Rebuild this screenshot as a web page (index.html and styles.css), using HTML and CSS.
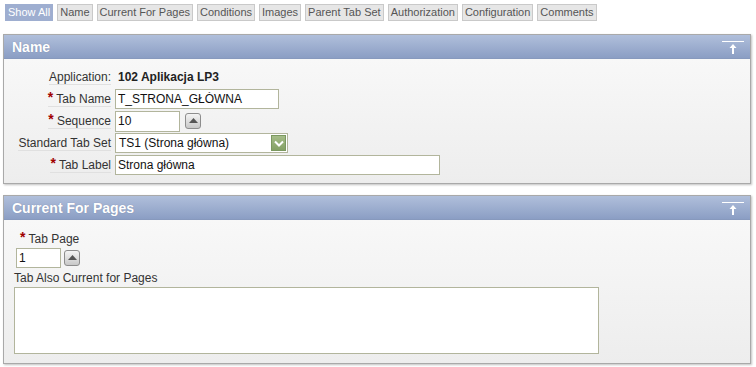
FILE: index.html
```html
<!doctype html>
<html>
<head>
    <meta charset="utf-8">
    <title>Tab</title>
    <link rel="stylesheet" href="styles.css">
</head>
<body>
    <div class="tabBar">
        <span class="tabBtn current">Show All</span>
        <span class="tabBtn">Name</span>
        <span class="tabBtn">Current For Pages</span>
        <span class="tabBtn">Conditions</span>
        <span class="tabBtn">Images</span>
        <span class="tabBtn">Parent Tab Set</span>
        <span class="tabBtn">Authorization</span>
        <span class="tabBtn">Configuration</span>
        <span class="tabBtn">Comments</span>
    </div>

    <div class="region" id="nameRegion">
        <div class="regionHeader">
            <h2>Name</h2>
            <svg class="toTop" width="22" height="13" viewBox="0 0 22 13"><path d="M0 0.5H22" stroke="#fff" stroke-width="1"/><path d="M11 3L7.5 7H10V13H12V7H14.5Z" fill="#fff"/></svg>
        </div>
        <div class="regionBody nameBody">
            <div class="row">
                <span class="label"><span class="labelText">Application:</span></span>
                <span class="value">102 Aplikacja LP3</span>
            </div>
            <div class="row">
                <span class="label"><span class="labelText"><span class="req">*</span> Tab Name</span></span>
                <span class="field"><input type="text" class="textField nameField" value="T_STRONA_GŁÓWNA"></span>
            </div>
            <div class="row">
                <span class="label"><span class="labelText"><span class="req">*</span> Sequence</span></span>
                <span class="field">
                    <input type="text" class="textField seqField" value="10">
                    <span class="upBtn"><svg width="9" height="6" viewBox="0 0 9 6"><path d="M4.5 0L9 5H0Z" fill="#555"/></svg></span>
                </span>
            </div>
            <div class="row">
                <span class="label"><span class="labelText">Standard Tab Set</span></span>
                <span class="field">
                    <span class="selectBox">TS1 (Strona główna)<span class="selectArrow"><svg width="10" height="7" viewBox="0 0 10 7"><path d="M1 1.5L5 5.5L9 1.5" stroke="#fff" stroke-width="2" fill="none"/></svg></span></span>
                </span>
            </div>
            <div class="row">
                <span class="label"><span class="labelText"><span class="req">*</span> Tab Label</span></span>
                <span class="field"><input type="text" class="textField labelField" value="Strona główna"></span>
            </div>
        </div>
    </div>

    <div class="region" id="pagesRegion">
        <div class="regionHeader">
            <h2>Current For Pages</h2>
            <svg class="toTop" width="22" height="13" viewBox="0 0 22 13"><path d="M0 0.5H22" stroke="#fff" stroke-width="1"/><path d="M11 3L7.5 7H10V13H12V7H14.5Z" fill="#fff"/></svg>
        </div>
        <div class="regionBody pagesBody">
            <div class="stackLabel pageLabel"><span class="req">*</span> Tab Page</div>
            <div class="field">
                <input type="text" class="textField pageField" value="1">
                <span class="upBtn"><svg width="9" height="6" viewBox="0 0 9 6"><path d="M4.5 0L9 5H0Z" fill="#555"/></svg></span>
            </div>
            <div class="stackLabel alsoLabel">Tab Also Current for Pages</div>
            <textarea class="alsoField"></textarea>
        </div>
    </div>
</body>
</html>
```

FILE: styles.css
```css
body {
    margin: 0;
    padding: 4px 5px 0 3px;
    background: #fff;
    font-family: "Liberation Sans", Arial, sans-serif;
    font-size: 12px;
    color: #333;
}

.tabBar {
    display: flex;
    gap: 4px;
    padding-left: 2px;
    margin-bottom: 13px;
}

.tabBtn {
    display: inline-block;
    height: 15px;
    line-height: 15px;
    padding: 0 2px;
    font-size: 11px;
    color: #555;
    background: #e6e6e6;
    border: 1px solid #c9c9c9;
}

.tabBtn.current {
    background: #9eaed0;
    border-color: #9eaed0;
    color: #fff;
}

.region {
    border: 1px solid #a9a9a9;
    box-shadow: 1px 1px 2px rgba(0, 0, 0, 0.25);
    margin-bottom: 11px;
}

.regionHeader {
    display: flex;
    align-items: center;
    justify-content: space-between;
    height: 23px;
    padding: 0 6px 0 8px;
    background: linear-gradient(#b0bfdb, #8b9ec4);
    border-bottom: 1px solid #8799bd;
}

.regionHeader h2 {
    margin: 0;
    font-size: 14px;
    font-weight: bold;
    color: #fff;
    text-shadow: 0 0 1px rgba(60, 70, 100, 0.4);
}

.toTop {
    display: block;
    margin-top: 2px;
}

.regionBody {
    background: linear-gradient(#f8f8f8, #ededed);
}

.nameBody {
    padding: 8px 0 8px 0;
}

.row {
    display: flex;
    align-items: center;
    height: 20px;
    margin-bottom: 2px;
}

.row:last-child {
    margin-bottom: 0;
}

.label {
    width: 107px;
    padding-right: 2px;
    text-align: right;
    white-space: nowrap;
}

.labelText {
    display: inline-block;
    border-bottom: 1px solid #e0e0e0;
}

.value {
    padding-left: 5px;
    font-weight: bold;
    color: #222;
}

.field {
    display: flex;
    align-items: center;
    gap: 5px;
    padding-left: 2px;
}

.req {
    color: #a00000;
    font-weight: bold;
    font-size: 14px;
    line-height: 10px;
    vertical-align: 1px;
}

.textField {
    box-sizing: border-box;
    height: 20px;
    margin: 0;
    padding: 1px 2px;
    font-family: "Liberation Sans", Arial, sans-serif;
    font-size: 12px;
    color: #111;
    background: #fff;
    border: 1px solid #b2b59c;
    outline: none;
}

.nameField {
    width: 164px;
}

.seqField {
    width: 65px;
    height: 21px;
}

.labelField {
    width: 325px;
}

.upBtn {
    display: flex;
    align-items: center;
    justify-content: center;
    width: 14px;
    height: 14px;
    border: 1px solid #8d8d8d;
    border-radius: 3px;
    background: linear-gradient(#f4f4f4, #c8c8c8);
}

.selectBox {
    box-sizing: border-box;
    display: flex;
    align-items: center;
    justify-content: space-between;
    width: 173px;
    height: 20px;
    padding: 0 1px 0 3px;
    font-size: 12px;
    color: #111;
    background: #fff;
    border: 1px solid #b2b59c;
}

.selectArrow {
    display: flex;
    align-items: center;
    justify-content: center;
    width: 15px;
    height: 16px;
    background: linear-gradient(#a5bc88, #84a165);
    border: 1px solid #7b9860;
    box-sizing: border-box;
}

.pagesBody {
    padding: 12px 0 9px 10px;
}

.stackLabel {
    margin-bottom: 2px;
}

.pageLabel {
    padding-left: 6px;
}

.pagesBody .field {
    padding-left: 2px;
    gap: 3px;
}

.pageField {
    width: 45px;
}

.alsoLabel {
    margin-top: 3px;
    margin-bottom: 2px;
}

.alsoField {
    display: block;
    box-sizing: border-box;
    width: 585px;
    height: 67px;
    margin: 0;
    background: #fff;
    border: 1px solid #b2b59c;
    resize: none;
    outline: none;
}
```
